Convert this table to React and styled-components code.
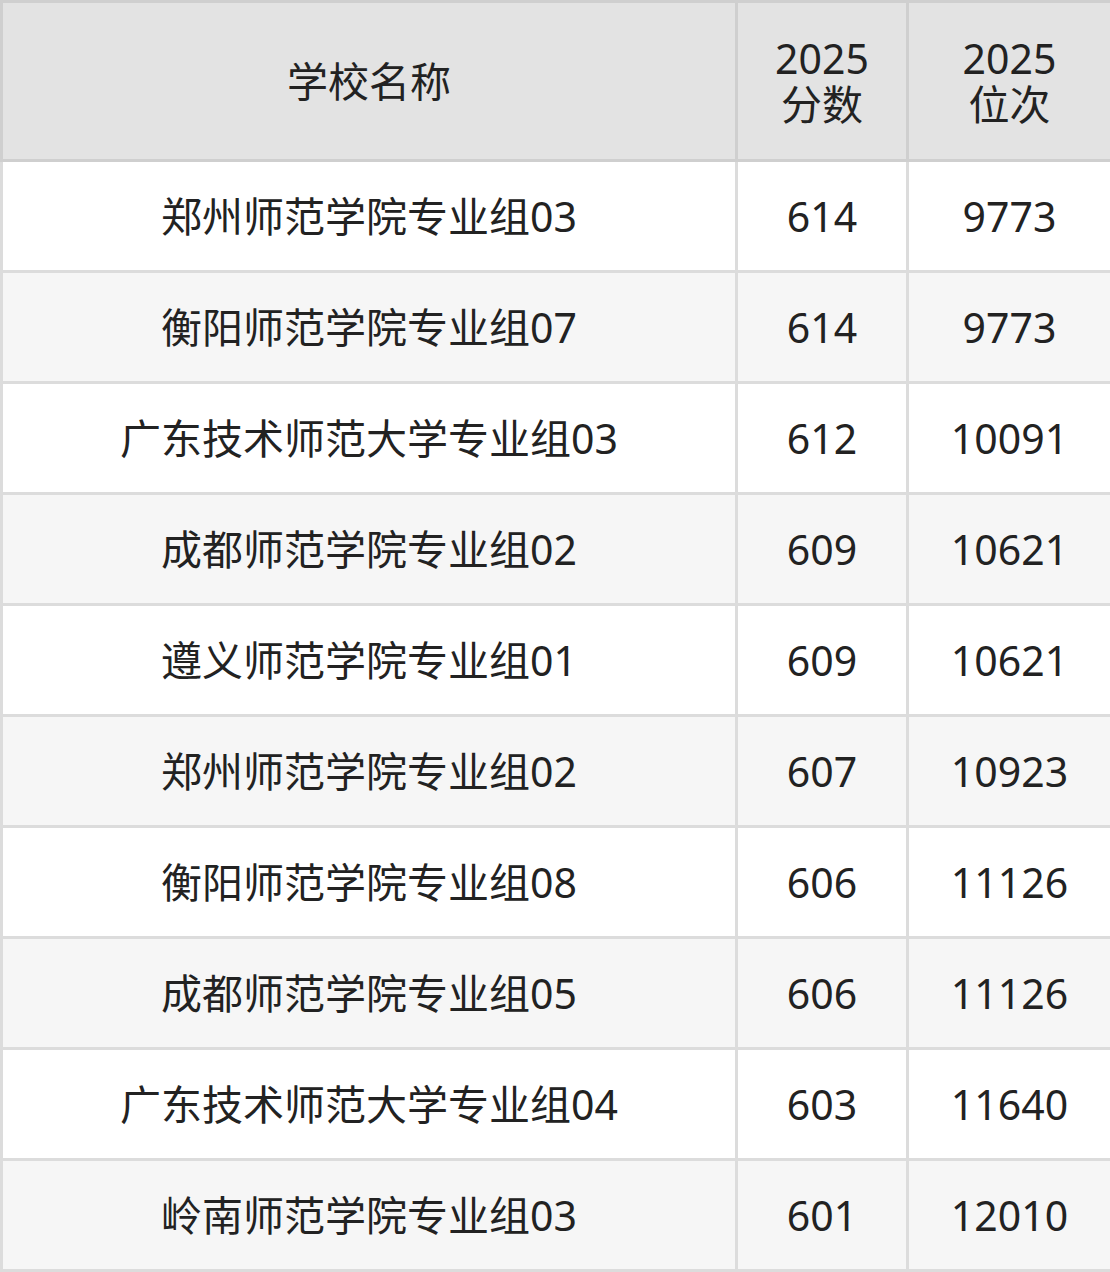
import styled, { createGlobalStyle } from "styled-components";

const GlobalStyle = createGlobalStyle`
  html, body {
    margin: 0;
    padding: 0;
    background: #ffffff;
  }
  body {
    font-family: "Noto Sans", "Noto Sans CJK SC", sans-serif;
  }
`;

const rows = [
  ["郑州师范学院专业组03", "614", "9773"],
  ["衡阳师范学院专业组07", "614", "9773"],
  ["广东技术师范大学专业组03", "612", "10091"],
  ["成都师范学院专业组02", "609", "10621"],
  ["遵义师范学院专业组01", "609", "10621"],
  ["郑州师范学院专业组02", "607", "10923"],
  ["衡阳师范学院专业组08", "606", "11126"],
  ["成都师范学院专业组05", "606", "11126"],
  ["广东技术师范大学专业组04", "603", "11640"],
  ["岭南师范学院专业组03", "601", "12010"],
];

export default function App() {
  return (
    <>
      <GlobalStyle />
      <Table>
        <colgroup>
          <col style={{ width: 735 }} />
          <col style={{ width: 171 }} />
          <col style={{ width: 204 }} />
        </colgroup>
        <thead>
          <tr>
            <Th>学校名称</Th>
            <Th>
              <Line>2025</Line>
              <Line>分数</Line>
            </Th>
            <Th>
              <Line>2025</Line>
              <Line>位次</Line>
            </Th>
          </tr>
        </thead>
        <tbody>
          {rows.map((r, i) => (
            <Tr key={i} $alt={i % 2 === 1}>
              <Td>{r[0]}</Td>
              <Td>{r[1]}</Td>
              <Td>{r[2]}</Td>
            </Tr>
          ))}
        </tbody>
      </Table>
    </>
  );
}

const Table = styled.table`
  width: 1110px;
  border-collapse: collapse;
  table-layout: fixed;
  color: #222222;
  font-size: 41px;
`;

const Th = styled.th`
  height: 156px;
  padding: 0;
  background: #e3e3e3;
  border: 3px solid #cfcfcf;
  font-weight: 400;
  line-height: 46px;
  text-align: center;
  vertical-align: middle;
`;

const Line = styled.div`
  height: 46px;
  line-height: 46px;
`;

const Tr = styled.tr`
  background: ${(p) => (p.$alt ? "#f6f6f6" : "#ffffff")};
`;

const Td = styled.td`
  height: 108px;
  padding: 0;
  border: 3px solid #dcdcdc;
  text-align: center;
  vertical-align: middle;
  line-height: 46px;
`;
